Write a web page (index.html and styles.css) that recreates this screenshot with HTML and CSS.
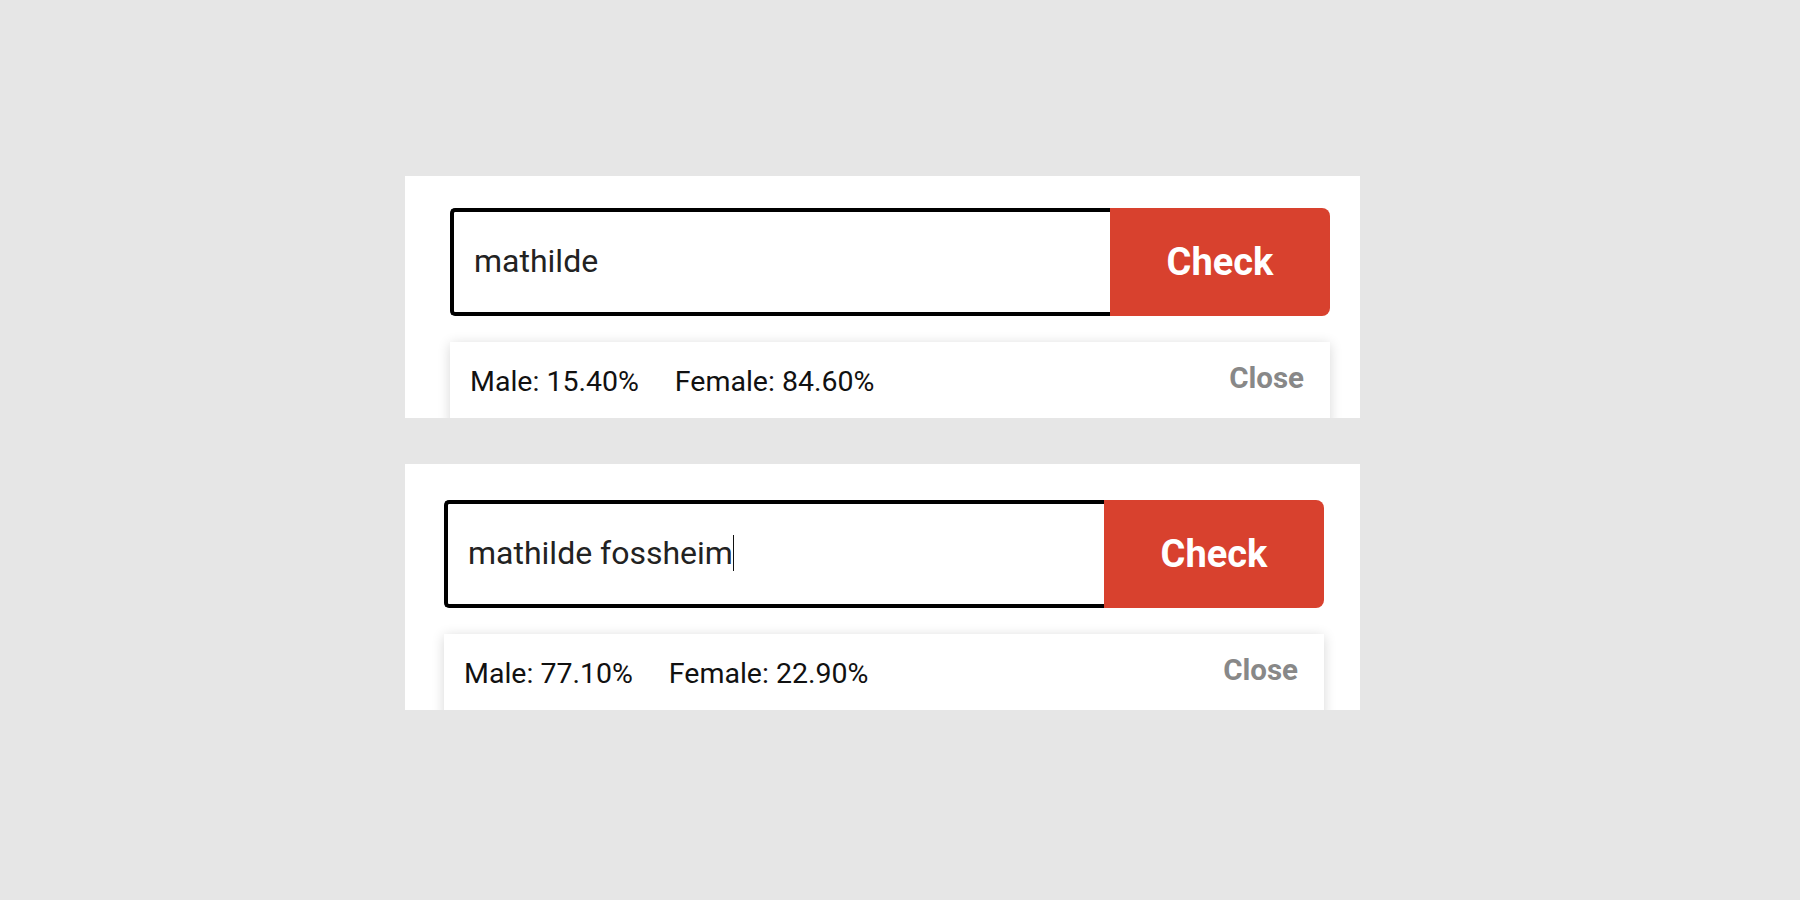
FILE: index.html
```html
<!DOCTYPE html>
<html lang="en">
<head>
    <meta charset="UTF-8">
    <meta name="viewport" content="width=device-width, initial-scale=1.0">
    <title>Gender check</title>
    <link rel="stylesheet" href="styles.css">
</head>
<body>
    <div class="page">
        <section class="shot shot-a">
            <div class="check-form">
                <div class="field">mathilde</div>
                <button class="check-btn">Check</button>
            </div>
            <div class="result">
                <span class="stat">Male: 15.40%</span>
                <span class="stat">Female: 84.60%</span>
                <span class="close">Close</span>
            </div>
        </section>
        <section class="shot shot-b">
            <div class="check-form">
                <div class="field">mathilde fossheim<span class="caret"></span></div>
                <button class="check-btn">Check</button>
            </div>
            <div class="result">
                <span class="stat">Male: 77.10%</span>
                <span class="stat">Female: 22.90%</span>
                <span class="close">Close</span>
            </div>
        </section>
    </div>
</body>
</html>
```

FILE: styles.css
```css
body{
    margin: 0;
    padding: 0;
    background: #e6e6e6;
    font-family: Roboto, "Liberation Sans", sans-serif;
}
.page{
    display: flex;
    flex-direction: column;
    gap: 46px;
    padding: 176px 0 0 405px;
}
.shot{
    width: 955px;
    box-sizing: border-box;
    background: #fff;
    overflow: hidden;
}
.shot-a{
    height: 242px;
    padding: 32px 0 0 45px;
}
.shot-b{
    height: 246px;
    padding: 36px 0 0 39px;
}
.check-form{
    display: flex;
    width: 880px;
    height: 108px;
}
.field{
    flex: 1;
    display: flex;
    align-items: center;
    box-sizing: border-box;
    border: 4px solid #000;
    border-right: none;
    border-radius: 5px 0 0 5px;
    padding: 0 0 2px 20px;
    font-size: 32px;
    color: #222;
}
.caret{
    display: inline-block;
    width: 1px;
    height: 36px;
    margin-left: 0;
    background: #111;
}
.check-btn{
    width: 220px;
    border: none;
    border-radius: 0 8px 8px 0;
    background: #d8412e;
    color: #fff;
    font-family: Roboto, "Liberation Sans", sans-serif;
    font-size: 38px;
    font-weight: 700;
    padding: 0;
}
.result{
    display: flex;
    align-items: flex-start;
    width: 880px;
    box-sizing: border-box;
    margin-top: 26px;
    padding: 23px 26px 30px 20px;
    background: #fff;
    box-shadow: 0 2px 12px rgba(0,0,0,0.16);
}
.stat{
    font-size: 28.5px;
    color: #111;
    margin-right: 36px;
}
.close{
    margin-left: auto;
    margin-top: -4px;
    font-size: 29.5px;
    font-weight: 700;
    color: #888;
}
```
